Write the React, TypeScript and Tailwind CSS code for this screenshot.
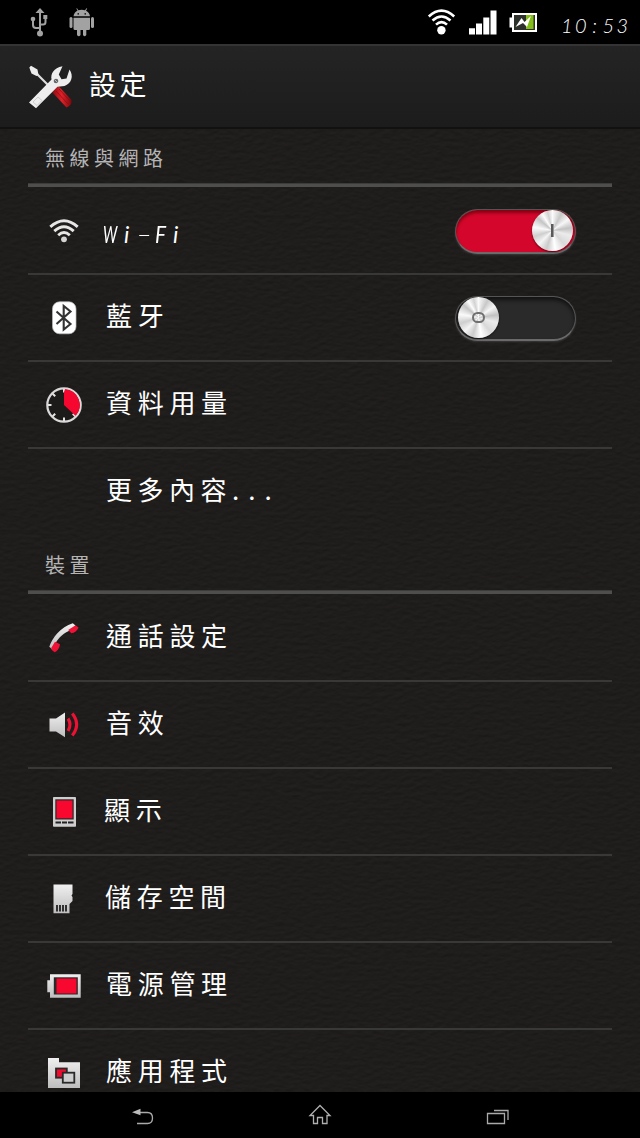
import type { ReactNode } from "react";

const Defs = () => (
  <svg width="0" height="0" className="absolute" aria-hidden="true">
    <defs>
      <linearGradient id="metal" x1="0" y1="0" x2="0" y2="1">
        <stop offset="0" stopColor="#f0f0f0" />
        <stop offset="1" stopColor="#bdbdbd" />
      </linearGradient>
      <linearGradient id="redHandle" x1="0" y1="0" x2="1" y2="0">
        <stop offset="0" stopColor="#8c0a10" />
        <stop offset="0.5" stopColor="#e0222a" />
        <stop offset="1" stopColor="#7d080d" />
      </linearGradient>
      <filter id="leather" x="0" y="0" width="100%" height="100%" colorInterpolationFilters="sRGB">
        <feTurbulence type="fractalNoise" baseFrequency="0.13 0.26" numOctaves="3" seed="7" />
        <feDiffuseLighting lightingColor="#292625" surfaceScale="0.450" diffuseConstant="0.92">
          <feDistantLight azimuth="260" elevation="56" />
        </feDiffuseLighting>
      </filter>
    </defs>
  </svg>
);

const Icon = ({ top, children }: { top: number; children?: ReactNode }) => (
  <svg className="mt-[22px] size-10 shrink-0" viewBox={`44 ${top} 40 40`}>
    {children}
  </svg>
);

const wifiIcon = (
  <Icon top={210}>
    <g fill="none" stroke="#e6e6e6" strokeWidth="2.9">
      <path d="M50.300 226.800Q64 214.600 77.700 226.800" />
      <path d="M54.300 231.100Q64 222.300 73.700 231.100" />
      <path d="M58.200 235.200Q64 229.900 69.800 235.200" />
    </g>
    <circle cx="64" cy="239.300" r="2.900" fill="#d4d4d4" />
  </Icon>
);

const bluetoothIcon = (
  <Icon top={297}>
    <rect x="52.500" y="301.800" width="23.500" height="32" rx="7" fill="#fff" stroke="#bbb" strokeWidth="0.700" />
    <path d="M56.500 311.500L70.500 324L63.700 329.500V306L70.500 311.500L56.500 324" fill="none" stroke="#333" strokeWidth="2.100" />
  </Icon>
);

const usageIcon = (
  <Icon top={384}>
    <circle cx="64" cy="405" r="16.700" fill="#1c1b1a" stroke="#d9d9d9" strokeWidth="2.200" />
    <path d="M64 389V392.500M64 417.500V421M48 405H51.500M52.700 393.700L55.200 396.200M52.700 416.300L55.200 413.800M75.300 416.300L72.800 413.800" stroke="#e4e4e4" strokeWidth="2" />
    <path d="M64 405V392L65 389.300A15.700 15.700 0 0 1 75.500 415.700Z" fill="#f5072f" />
  </Icon>
);

const phoneIcon = (
  <Icon top={617}>
    <path d="M49.300 646.800C52.500 637 60.500 627.500 72.800 623.200L75.500 625.500L71.500 630C64 632.500 58.500 637.500 55.500 643.500L52.500 649.500Z" fill="url(#metal)" />
    <path d="M68.200 630L75.500 625.200L78.500 627.600C77.200 631 74.500 633 71.300 633.300Z" fill="#ef1235" />
    <path d="M51.500 647.500L55 641.800L60 644.200C59.500 648.500 57.500 650.500 54.700 652.300L51.500 649.800Z" fill="#ef1235" />
  </Icon>
);

const soundIcon = (
  <Icon top={704}>
    <path d="M49.500 718.500H56L65 712.500V737.300L56 731.500H49.500Z" fill="url(#metal)" />
    <g fill="none" stroke="#ed1133" strokeWidth="3.200">
      <path d="M68 718.500Q72 724.500 68 731" />
      <path d="M72.300 713.500Q81 724.500 72.300 735.500" />
    </g>
  </Icon>
);

const displayIcon = (
  <Icon top={791}>
    <rect x="53" y="797" width="23" height="29.800" rx="0.800" fill="#cecece" />
    <rect x="55.300" y="799.300" width="18.400" height="20.200" fill="#292929" />
    <rect x="56.500" y="800.500" width="16" height="17.800" fill="#f8072e" />
    <path d="M55.500 822.500H61M62 822.500H67M68 822.500H73.500" stroke="#222" strokeWidth="2" />
  </Icon>
);

const storageIcon = (
  <Icon top={878}>
    <path d="M53.500 884.500H72.500V894L71.500 895.500L72.500 897V901L69.500 904V913.300H53.500Z" fill="url(#metal)" />
    <path d="M57 905V911.500M60 905V911.500M63 905V911.500M66 905V911.500" stroke="#222" strokeWidth="1.800" />
  </Icon>
);

const powerIcon = (
  <Icon top={965}>
    <path d="M50 974.200H80.700V997.700H50V992.200H47.300V980.200H50Z" fill="url(#metal)" />
    <rect x="53.800" y="977.300" width="24" height="17.200" fill="#292929" />
    <rect x="56.500" y="978.500" width="20" height="15" fill="#f8072e" />
  </Icon>
);

const appsIcon = (
  <Icon top={1052}>
    <path d="M48 1058H59V1062.200H80V1088H48Z" fill="url(#metal)" />
    <rect x="56" y="1068.500" width="10.800" height="9.200" fill="#ee0b2e" stroke="#292929" strokeWidth="1.800" />
    <rect x="62.800" y="1072.700" width="11.500" height="10" fill="#cecece" stroke="#292929" strokeWidth="1.800" />
  </Icon>
);

const Switch = ({ on }: { on?: boolean }) => (
  <div
    className={`mt-[21px] ml-auto mr-9 flex h-[45px] w-[121px] items-start rounded-full border border-b-2 border-[#555] border-b-[#6a6a6a] px-[2px] ${
      on
        ? "justify-end bg-[#d4062b] shadow-[inset_0_3px_3px_#40000088,0_1px_2px_#5558]"
        : "justify-start bg-[#2a2a2a] shadow-[inset_0_3px_4px_#0009,0_1px_2px_#5558]"
    }`}
  >
    <div className="flex size-[41px] items-center justify-center rounded-full bg-[conic-gradient(#fafafa_0deg,#c8c8c8_28deg,#f7f7f7_55deg,#c2c2c2_82deg,#ececec_105deg,#d8d8d8_140deg,#fff_172deg,#cbcbcb_198deg,#f4f4f4_225deg,#cecece_252deg,#fafafa_280deg,#c4c4c4_310deg,#fdfdfd_328deg,#d2d2d2_345deg,#fafafa_360deg)] shadow-[0_1px_2px_#0009]">
      {on ? (
        <div className="h-[13px] w-[3px] border-r border-[#999] bg-[#5a5a5a]" />
      ) : (
        <div className="h-[11px] w-[13px] rounded-full border-2 border-[#707070]" />
      )}
    </div>
  </div>
);

const Row = ({ icon, label, pad, control }: { icon: ReactNode; label: ReactNode; pad?: string; control?: ReactNode }) => (
  <div className="relative mx-7 flex h-[87px] shrink-0 items-start border-b-2 border-[#383837] pl-4 last:border-0">
    {icon}
    <div className={`mt-[20px] h-10 whitespace-nowrap text-[26px] leading-10 tracking-[5.700px] text-white ${pad ?? "pl-[22px]"}`}>{label}</div>
    {control}
  </div>
);

const Heading = ({ children, h }: { children: ReactNode; h: string }) => (
  <div className={`relative mx-7 flex shrink-0 flex-col justify-end pb-px ${h}`}>
    <div className="mb-[10px] pl-[17px] text-[20px] leading-[30px] tracking-[4.500px] text-[#b4b4b4]">{children}</div>
    <div className="h-1 border-t border-[#3c3c3b] bg-[#4e4e4d]" />
  </div>
);

const StatusBar = () => (
  <div className="flex h-11 shrink-0 bg-black">
    <svg className="h-11 w-[110px]" viewBox="0 0 110 44">
      <g fill="none" stroke="#a2a2a2" strokeWidth="2">
        <path d="M40 12V33M33 19V25Q33 28 36 28H40M45.500 17V22Q45.500 24.500 43 24.500H40" />
      </g>
      <g fill="#a2a2a2">
        <path d="M40 8L44.500 13H35.500Z" />
        <circle cx="40" cy="33.500" r="3" />
        <circle cx="33" cy="19" r="2.300" />
        <rect x="43.300" y="15" width="4" height="4" />
        <path d="M73.500 16.300C73.800 13.500 75.500 11.500 77.500 10.700L76.300 8.500L77 8.200L78.300 10.300Q81.700 9.200 85 10.300L86.500 8.200L87.200 8.500L86 10.700C88.300 11.700 89.700 13.500 90 16.300Z" />
        <path d="M73.500 17.700H90V28.500Q90 30 88.500 30H86.300V35Q84.500 37.500 83 35V30H80.500V35Q78.800 37.500 77 35V30H75Q73.500 30 73.500 28.500Z" />
        <rect x="69.500" y="17" width="3" height="11" rx="1.500" />
        <rect x="91" y="17" width="3" height="11" rx="1.500" />
      </g>
      <path d="M77.500 13.800H79M84.500 13.800H86" stroke="#000" strokeWidth="1.300" />
    </svg>
    <svg className="ml-[310px] h-11 w-[130px]" viewBox="420 0 130 44">
      <g fill="none" stroke="#fff" strokeWidth="2.600">
        <path d="M428.800 16.500Q441.500 4.800 454.200 16.500" />
        <path d="M432.500 20.500Q441.500 12.500 450.500 20.500" />
        <path d="M436 24.600Q441.500 19.500 447 24.600" />
      </g>
      <circle cx="441.400" cy="30.300" r="4.200" fill="#fff" />
      <path d="M469 28.300H475V34.500H469ZM476 23.500H482V34.500H476ZM483.300 17.500H489.300V34.500H483.300ZM490.500 10.500H496.500V34.500H490.500Z" fill="#fff" />
      <path d="M512 13H537V32H512V27.500H509.500V17.500H512Z" fill="#fff" />
      <rect x="514" y="15" width="21" height="15" fill="#2d302b" />
      <path d="M526 15H533.500V29H526Z" fill="#83bd17" />
      <path d="M515.500 27L521.500 18L524.500 22L531 16L527 27L523 23Z" fill="#fff" />
    </svg>
    <div className="mt-[7px] ml-[11px] whitespace-nowrap font-[Lato] text-[20px] font-light italic leading-9 tracking-[2.500px] text-white">
      10<span className="ml-[3px] mr-[3px]">:</span>53
    </div>
  </div>
);

export default function App() {
  return (
    <div className="flex h-[1138px] w-[640px] flex-col overflow-hidden bg-black font-['Noto_Sans_CJK_TC','Noto_Sans',sans-serif]">
      <Defs />
      <StatusBar />
      <header className="flex h-[85px] shrink-0 items-center border-t-2 border-b-2 border-t-[#343434] border-b-[#111] bg-linear-to-b from-[#242424] to-[#1c1c1c] pl-[26px]">
        <svg className="size-12" viewBox="26 63 48 48">
          <path d="M31 68L49 86" stroke="#dedede" strokeWidth="2.200" />
          <path d="M29.300 67.500L31 65.800L37.500 69.500L38.500 75L36.500 76L31.500 73.500Z" fill="#ececec" />
          <path d="M52 92L58.500 86L71.500 100Q72 105.500 66.500 107.500Z" fill="url(#redHandle)" />
          <path d="M56 91L68 104M59 89L70 101" stroke="#8a0c12" strokeWidth="0.800" />
          <path d="M29 102.500L51.500 79.500C50.500 74 53.500 68 62.500 66.300L58.800 74.500L61.500 79.300L66.500 78.500L69.500 69.500C74 76 71.500 83.500 64.500 86L57.500 86.800L36 108.300Z" fill="#ededed" />
          <path d="M33 102L38 97L42 100.500L37 105.500Z" fill="none" stroke="#c4c4c4" strokeWidth="0.800" />
          <circle cx="56" cy="81" r="2.300" fill="#666" />
          <path d="M54.500 79.500L57.500 82.500" stroke="#ccc" strokeWidth="0.800" />
        </svg>
        <h1 className="-mt-[5px] ml-[15px] text-[27px] leading-10 tracking-[3.500px] text-white">設定</h1>
      </header>
      <main className="relative flex h-[963px] shrink-0 flex-col overflow-hidden bg-[#1f1d1c]">
        <svg className="absolute inset-0 h-full w-full" aria-hidden="true">
          <rect width="100%" height="100%" filter="url(#leather)" />
        </svg>
        <Heading h="h-[59px]">無線與網路</Heading>
        <Row
          icon={wifiIcon}
          pad="pl-[19px] pt-[6px]"
          label={
            <span className="flex font-[Lato] text-[23px] italic tracking-normal">
              <span className="w-[21px] origin-left scale-x-[0.650]">W</span>
              <span className="w-[12px]">i</span>
              <span className="w-[7px] origin-left scale-x-[2] font-light">-</span>
              <span className="ml-[12px] w-[18px] origin-left scale-x-90">F</span>
              <span>i</span>
            </span>
          }
          control={<Switch on />}
        />
        <Row icon={bluetoothIcon} label="藍牙" control={<Switch />} />
        <Row icon={usageIcon} label="資料用量" />
        <div className="relative mx-7 flex h-[87px] shrink-0 pl-[78px]">
          <div className="mt-[20px] text-[26px] leading-10 tracking-[5.500px] text-white">
            更多內容<span className="tracking-[9px]">...</span>
          </div>
        </div>
        <Heading h="h-[59px]">裝置</Heading>
        <Row icon={phoneIcon} label="通話設定" />
        <Row icon={soundIcon} label="音效" />
        <Row icon={displayIcon} pad="pl-[20px]" label="顯示" />
        <Row icon={storageIcon} pad="pl-[21px]" label="儲存空間" />
        <Row icon={powerIcon} label="電源管理" />
        <Row icon={appsIcon} label="應用程式" />
      </main>
      <nav className="flex h-[46px] shrink-0 items-center justify-between bg-black px-[122px]">
        <svg className="h-[46px] w-10" viewBox="122 1092 40 46">
          <path d="M139 1112.500H147.500Q152.500 1112.500 152.500 1118Q152.500 1123.500 147.500 1123.500H137" fill="none" stroke="#aaa" strokeWidth="1.300" />
          <path d="M132 1112.300L140.500 1108.800V1115.300Z" fill="#bbb" />
        </svg>
        <svg className="h-[46px] w-10" viewBox="300 1092 40 46">
          <path d="M320 1105.500L330 1115.500H327V1123.500H322.500V1117.500H317.500V1123.500H313.500V1115.500H310Z" fill="none" stroke="#b0b0b0" strokeWidth="1.300" />
        </svg>
        <svg className="h-[46px] w-10" viewBox="478 1092 40 46">
          <path d="M487.500 1113.500H504.500V1123.500H487.500ZM494 1110.500H508V1120" fill="none" stroke="#aaa" strokeWidth="1.300" />
        </svg>
      </nav>
    </div>
  );
}
